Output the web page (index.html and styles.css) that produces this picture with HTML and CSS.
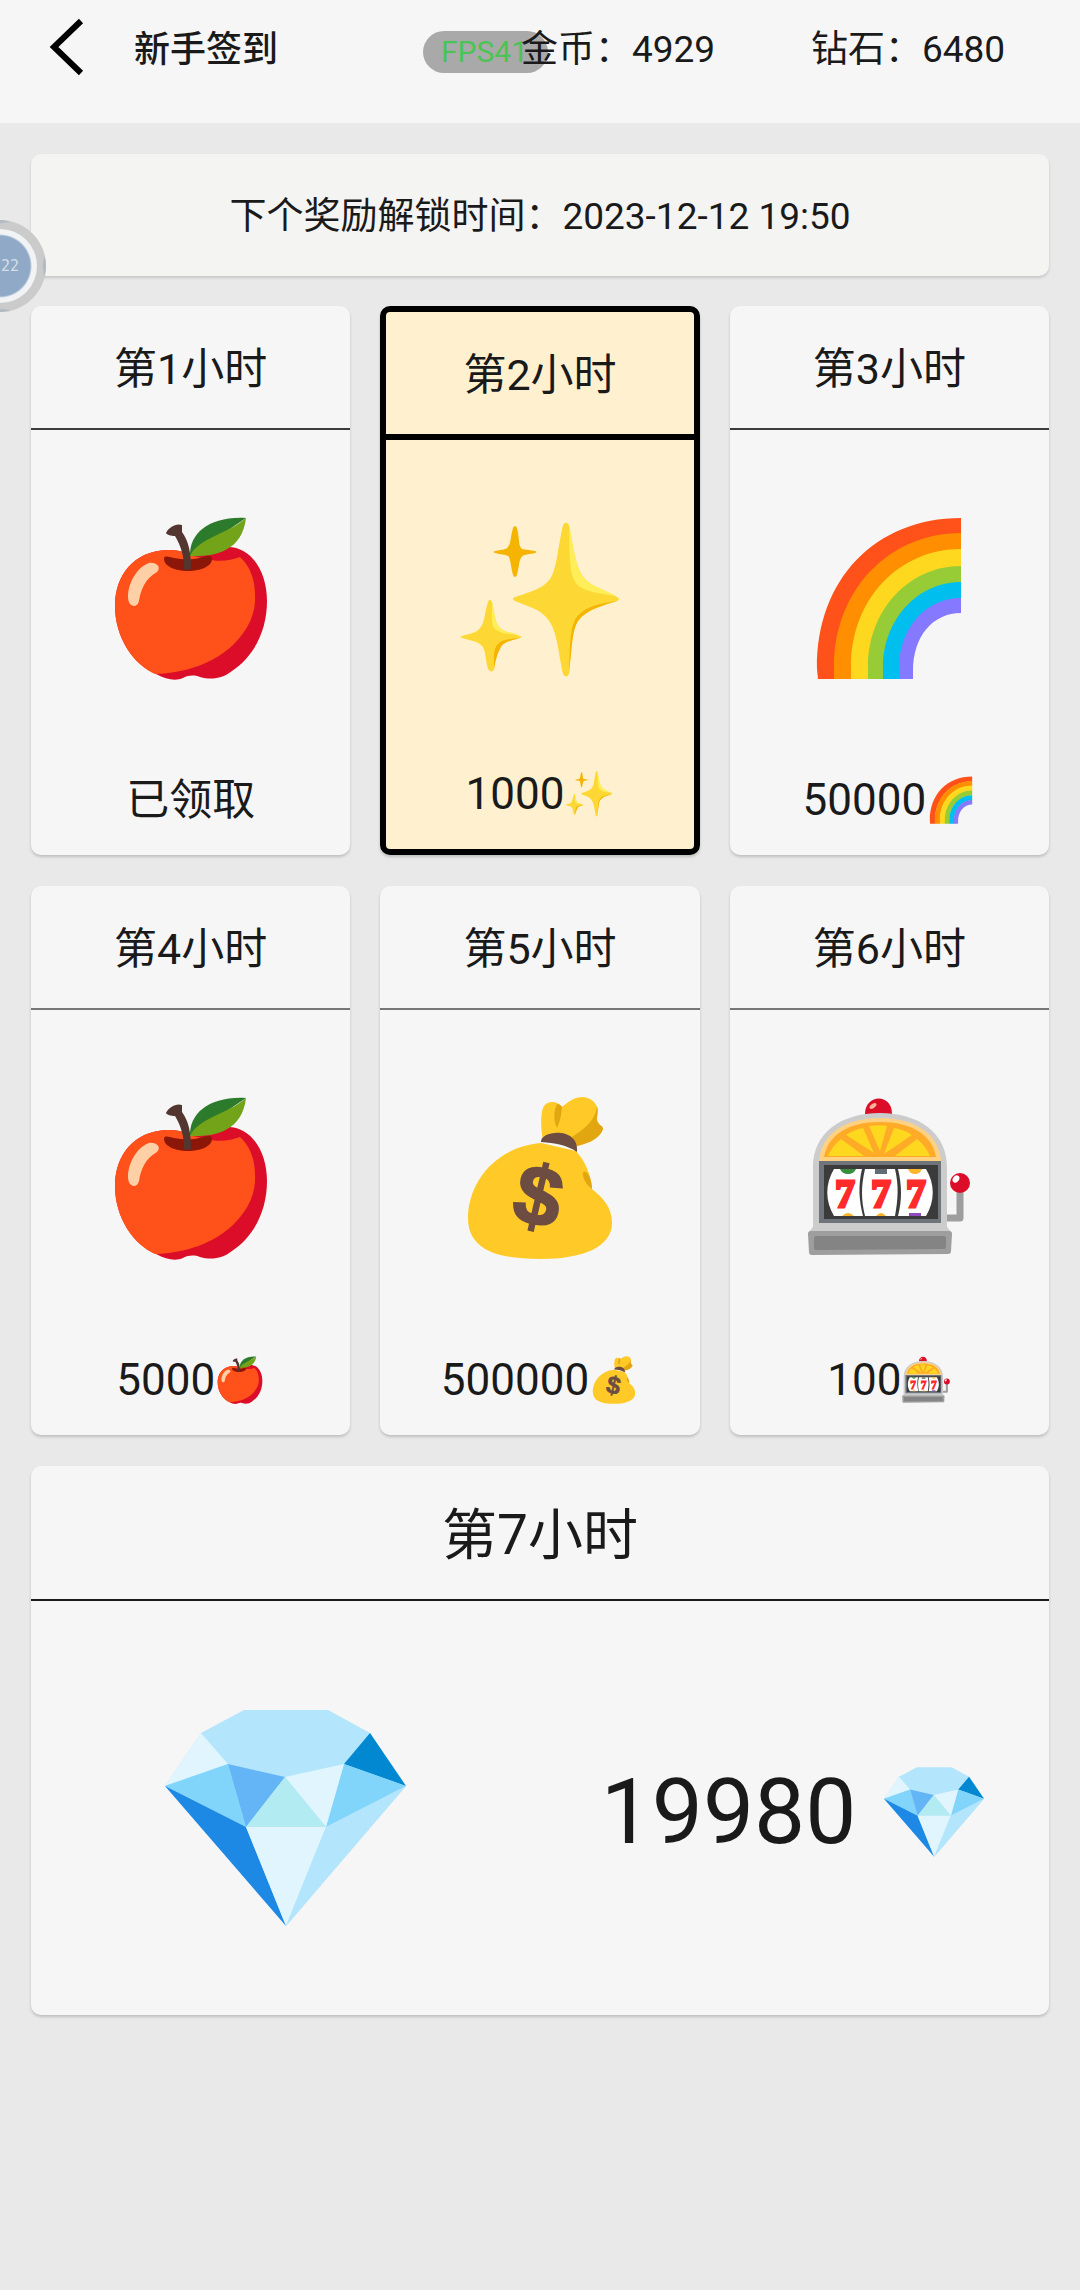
FILE: index.html
```html
<!DOCTYPE html>
<html lang="zh-CN">
<head>
    <meta charset="UTF-8">
    <meta name="viewport" content="width=device-width, initial-scale=1.0">
    <title>新手签到</title>
    <link rel="stylesheet" href="styles.css">
</head>
<body>
    <!-- reward icons, used large in the card and small next to the amount -->
    <svg class="sprite" aria-hidden="true">
        <symbol id="apple" viewBox="0 0 170 170">
            <path fill="#dc0d28" d="M61 37C28 38 9 62 9 93c0 32 19 59 41 68 11 6 20 7 27 4 6-3 11-3 17-1 11 3 22 2 32-6 24-16 35-43 35-70 0-30-16-54-39-54-16 0-27 8-39 8-5-4-13-5-22-5z"/>
            <path fill="#ff5119" d="M61 37C28 38 9 62 9 93c0 32 19 59 40 68 31-1 59-11 78-29 16-16 23-32 22-50 0-17-6-30-15-38-10 4-22 5-34 2L83 42c-5-4-13-5-22-5z"/>
            <path fill="#8c1709" d="M58 46c0 7 11 12 24 12s24-5 24-12c0-4-5-3-9-2-9 3-19 3-29 1-5-1-10-3-10 1z"/>
            <path fill="#543630" d="M60 20c3-6 10-10 16-8v7c6 8 9 19 9 37-3 1-5 1-7 0 0-13-3-23-9-33-4 0-8-1-9-3z"/>
            <path fill="#2c7b2c" d="M84 43C83 20 104 3 140 5L84 43z"/>
            <path fill="#72a319" d="M84 43c22 1 52-3 56-38-18 16-48 20-56 38z"/>
            <path fill="#ffcfa6" d="M22 84c0-16 11-31 21-34 7-1 13 4 8 9-12 7-16 17-18 29-2 8-11 6-11-4z"/>
        </symbol>
        <symbol id="sparkles" viewBox="0 0 170 170">
            <path fill="#fdd835" d="M108 10q3-5 6 0c6 31 7 45 18 56 7 6 15 8 30 16q4 2 0 4c-25 7-36 13-41 24-4 10-4 22-7 49q-3 5-6 0c-6-29-6-46-18-58-7-7-13-8-30-15q-4-2 0-4c18-6 27-8 35-18 7-11 7-27 13-54z"/>
            <path fill="#ffee58" d="M114 10c6 31 7 45 18 56 7 6 14 7 29 15-14-2-28-4-36-9-12-8-10-30-11-62z"/>
            <path fill="#f4b400" d="M163 86c-26 7-37 13-42 24-4 10-4 22-7 49 1-29 1-44 6-54 7-12 20-16 43-19z"/>
            <path fill="#f4b400" d="M58 13q2-4 4 0c3 13 1 17 5 21l13 2q3 1 0 2c-9 2-12 1-14 5-2 3-2 9-4 17q-2 4-4 0c-3-11-2-16-5-19-3-2-7-1-13-3q-3-1 0-2c8-2 11-1 13-4 3-4 2-8 5-19z"/>
            <path fill="#fdd835" d="M33 87q2-5 4 0c3 14 3 21 8 26 4 4 10 4 20 8q3 1 0 2c-12 3-18 5-20 11-3 5-4 10-6 20q-2 5-6 0c-3-11-2-20-7-24-4-4-9-4-19-7q-3-1 0-2c10-3 14-3 18-8 5-6 4-13 8-26z"/>
            <path fill="#ffee58" d="M37 87c3 14 3 21 8 26 4 4 9 4 19 7-12-1-21-2-25-7-3-5-2-13-2-26z"/>
            <path fill="#f4b400" d="M65 123c-12 3-18 5-20 11-3 5-4 10-6 20 0-12-1-18 3-24 5-6 12-6 23-7z"/>
        </symbol>
        <symbol id="rainbow" viewBox="0 0 170 170">
            <path fill="#ff5119" d="M157 5C72 5 12 66 13 156l1 10h17v-12C31 76 87 21 157 21z"/>
            <path fill="#ff8f00" d="M157 20C86 20 30 76 30 154v12h18v-12C48 86 96 37 157 37z"/>
            <path fill="#fdd81f" d="M157 36C95 36 47 86 47 154v12h18v-12c0-57 41-100 92-100z"/>
            <path fill="#97cc37" d="M157 53c-52 0-93 44-93 101v12h16v-11c0-47 34-85 77-85z"/>
            <path fill="#00bfee" d="M157 69c-44 0-78 38-78 86v11h17v-11c0-39 27-69 61-69z"/>
            <path fill="#8479ff" d="M157 85c-35 0-62 30-62 70v11h14v-8c0-35 20-58 48-58z"/>
        </symbol>
        <symbol id="money" viewBox="0 0 170 170">
            <path fill="#ffca28" d="M86 50C40 54 13 90 13 125c0 30 26 41 72 41 45 0 72-13 72-36 0-16-9-25-20-34-1-15-7-28-16-38z"/>
            <path fill="#e2a610" d="M128 79c4-3 9 7 9 17-6-4-10-12-9-17z"/>
            <path fill="#ffca28" d="M88 47c-3-15-2-30 1-34 4-6 14-5 18 1 10-9 21-14 31-6 6 6 5 11 4 18 2 8 6 7 6 10-3 9-13 14-26 17z"/>
            <path fill="#e2a610" d="M142 13c2 7-1 10 0 15 2 5 6 4 6 8-3 9-13 14-26 17l-5-9c14-9 24-18 25-31zM107 14c-1 8-1 12-5 21-4-8-3-18 0-24 2 0 4 1 5 3z"/>
            <path fill="#6d4c41" d="M86 49c-1-12 39-16 36 10-10-7-22-9-36-10z"/>
            <text class="money-sign" x="83" y="132" transform="rotate(13 83 105)">$</text>
        </symbol>
        <symbol id="slot" viewBox="0 0 170 170">
            <path fill="none" stroke="#9e9e9e" stroke-width="7" stroke-linejoin="round" d="M156 98v27h-14"/>
            <circle cx="156" cy="90" r="10" fill="#dc0d28"/>
            <ellipse cx="152" cy="86" rx="3" ry="4" fill="#fff" transform="rotate(35 152 86)"/>
            <path fill="#dc0d28" d="M61 21c0-20 27-21 27 0z"/>
            <ellipse cx="69" cy="13" rx="4" ry="2" fill="#ffb09a" transform="rotate(-35 69 13)"/>
            <path fill="#ccc" d="M9 134V74c0-34 28-54 67-54s67 20 67 54v60l5 6H4z"/>
            <path fill="#ffd180" d="M15 68c2-27 26-43 61-43s59 16 61 43z"/>
            <path fill="#ffab28" d="M20 64c4-22 24-35 56-35s52 13 56 35z"/>
            <path fill="#fdd81f" d="M24 63c3-7 7-12 13-17l23 17zM42 42c6-4 11-6 17-7l11 25zM65 33c7-1 13-1 18 0l-7 25zM90 35c7 1 12 3 18 7L80 61zM113 46c6 5 10 10 13 17H91z"/>
            <path fill="#70747b" d="M15 68h122v62H15z"/>
            <path fill="#3b3b3b" d="M20 72h114v54H20z"/>
            <path fill="#fff" d="M30 76h28c-4 17-3 31 1 47H30c-9-15-9-32 0-47zM61 76h30c4 17 3 31 0 47H61c-4-16-4-30 0-47zM94 76h28c9 15 9 32 0 47H94c4-16 4-30 0-47z"/>
            <path fill="#388e3c" d="M36 76h16q-2 5-8 5t-8-5z"/>
            <path fill="#616c75" d="M71 76h12v5H71z"/>
            <path fill="#fbb52a" d="M104 76h14q-2 5-7 5t-7-5zM38 123q6-6 12 0zM72 123q5-6 10 0z"/>
            <path fill="#8e4bc0" d="M105 123v-3h12v3z"/>
            <g class="sevens">
                <text x="41" y="114">7</text>
                <text x="77" y="114">7</text>
                <text x="112" y="114">7</text>
            </g>
            <path fill="#9e9e9e" d="M7 138h138q3 0 3 3l-1 17q0 3-3 3L8 162q-3 0-3-3L4 141q0-3 3-3z"/>
            <path fill="#848484" d="M12 143h128q2 0 2 2v9q0 2-2 2l-128 1q-2 0-2-2v-10q0-2 2-2z"/>
        </symbol>
        <symbol id="diamond" viewBox="0 0 241 216">
            <path fill="#b3e5fc" d="M79 0h84l42 23 36 53-120 140L0 76l36-53z"/>
            <path fill="#e1f5fe" d="M36 23l27 31L0 76z"/>
            <path fill="#0288d1" d="M205 23l36 53-62-22z"/>
            <path fill="#81d4fa" d="M0 76l63-22 18 63zM241 76l-62-22-18 63z"/>
            <path fill="#64b5f6" d="M63 54l57 13-39 50z"/>
            <path fill="#e1f5fe" d="M179 54l-59 13 41 50z"/>
            <path fill="#b2ebf2" d="M120 67l41 50H81z"/>
            <path fill="#1e88e5" d="M0 76l81 41 40 99z"/>
            <path fill="#e1f5fe" d="M81 117h80l-40 99z"/>
            <path fill="#b3e5fc" d="M161 117l80-41-120 140z"/>
        </symbol>
    </svg>

    <header class="top-bar">
        <button class="back" type="button" aria-label="返回">
            <svg viewBox="0 0 36 60"><path d="M33 4L6 30l27 26"/></svg>
        </button>
        <h1>新手签到</h1>
        <div class="balances">
            <span>金币：4929</span>
            <span>钻石：6480</span>
        </div>
    </header>

    <main>
        <div class="notice">下个奖励解锁时间：2023-12-12 19:50</div>

        <div class="card-grid">
            <div class="card">
                <h2>第1小时</h2>
                <div class="reward"><svg class="icon"><use href="#apple"/></svg></div>
                <div class="amount claimed">已领取</div>
            </div>
            <div class="card active">
                <h2>第2小时</h2>
                <div class="reward"><svg class="icon"><use href="#sparkles"/></svg></div>
                <div class="amount">1000<svg class="icon-small"><use href="#sparkles"/></svg></div>
            </div>
            <div class="card">
                <h2>第3小时</h2>
                <div class="reward"><svg class="icon"><use href="#rainbow"/></svg></div>
                <div class="amount">50000<svg class="icon-small"><use href="#rainbow"/></svg></div>
            </div>
            <div class="card later">
                <h2>第4小时</h2>
                <div class="reward"><svg class="icon"><use href="#apple"/></svg></div>
                <div class="amount">5000<svg class="icon-small"><use href="#apple"/></svg></div>
            </div>
            <div class="card later">
                <h2>第5小时</h2>
                <div class="reward"><svg class="icon"><use href="#money"/></svg></div>
                <div class="amount">500000<svg class="icon-small"><use href="#money"/></svg></div>
            </div>
            <div class="card later">
                <h2>第6小时</h2>
                <div class="reward"><svg class="icon"><use href="#slot"/></svg></div>
                <div class="amount">100<svg class="icon-small"><use href="#slot"/></svg></div>
            </div>
            <div class="card final">
                <h2>第7小时</h2>
                <div class="final-body">
                    <div class="reward"><svg class="diamond"><use href="#diamond"/></svg></div>
                    <div class="final-amount">19980<svg class="diamond-small"><use href="#diamond"/></svg></div>
                </div>
            </div>
        </div>
    </main>

    <div class="fps">FPS41</div>
    <div class="float-ball"><span>22</span></div>
</body>
</html>
```

FILE: styles.css
```css
* {
    box-sizing: border-box;
}
body {
    font-family: Roboto, "Noto Sans CJK SC", sans-serif;
    font-size: 37px;
    line-height: 48px;
    background-color: #e9e9e9;
    color: #1a1a1a;
    margin: 0;
    position: relative;
    overflow-x: hidden;
}
h1, h2 {
    margin: 0;
}
.sprite {
    display: none;
}

/* top bar */
.top-bar {
    display: flex;
    height: 123px;
    padding: 17px 27px 0 48px;
    background-color: #f6f6f6;
}
.back {
    width: 36px;
    height: 60px;
    padding: 0;
    border: none;
    background: none;
    cursor: pointer;
}
.back svg {
    display: block;
    width: 36px;
    height: 60px;
    fill: none;
    stroke: #000;
    stroke-width: 6;
}
h1 {
    margin-left: 50px;
    font-size: 36px;
    font-weight: 500;
    line-height: 66px;
}
.balances {
    position: relative;
    z-index: 2;
    display: flex;
    width: 580px;
    margin-left: auto;
    line-height: 66px;
    text-align: center;
}
.balances span {
    flex: 1;
}

main {
    padding: 31px;
}
.notice {
    padding: 39px 20px 35px;
    margin-bottom: 30px;
    border-radius: 10px;
    background-color: #f4f4f2;
    box-shadow: 0 2px 3px rgba(0, 0, 0, 0.15);
    text-align: center;
}

/* reward cards */
.card-grid {
    display: grid;
    grid-template-columns: repeat(3, 1fr);
    gap: 31px 30px;
}
.card {
    display: flex;
    flex-direction: column;
    min-height: 549px;
    border-radius: 10px;
    background-color: #f6f6f6;
    box-shadow: 0 2px 3px rgba(0, 0, 0, 0.18);
    text-align: center;
}
.card h2 {
    padding: 39px 0 35px;
    border-bottom: 2px solid #3c3c3c;
    font-size: 43px;
    font-weight: 400;
}
.card.later h2 {
    border-color: #777;
}
.card.active {
    border: 6px solid #000;
    background-color: #fff1d0;
}
.card.active h2 {
    border-bottom: 6px solid #000;
}
.reward {
    flex: 1;
    display: flex;
    align-items: center;
    justify-content: center;
    padding-top: 20px;
}
.icon {
    width: 170px;
    height: 170px;
}
.amount {
    display: flex;
    align-items: center;
    justify-content: center;
    height: 110px;
    font-size: 44px;
}
.amount.claimed {
    font-size: 43px;
}
.icon-small {
    width: 50px;
    height: 50px;
}
.card.final {
    grid-column: 1 / -1;
}
.card.final h2 {
    padding: 45px 0 40px;
    border-color: #1a1a1a;
    font-size: 55px;
}
.final-body {
    flex: 1;
    display: flex;
}
.diamond {
    width: 241px;
    height: 216px;
}
.final-amount {
    flex: 1;
    display: flex;
    align-items: center;
    justify-content: center;
    padding-top: 8px;
    font-size: 91px;
}
.diamond-small {
    width: 100px;
    height: 90px;
    margin: 0 4px 0 28px;
}
.money-sign {
    fill: #6d4c41;
    stroke: #6d4c41;
    stroke-width: 2;
    font-family: "Liberation Sans", sans-serif;
    font-size: 84px;
    font-weight: 700;
    text-anchor: middle;
}
.sevens {
    fill: #ff2a2a;
    stroke: #ff2a2a;
    stroke-width: 3;
    font-family: "Liberation Serif", serif;
    font-size: 39px;
    font-weight: 700;
    text-anchor: middle;
}

/* overlays */
.fps {
    position: absolute;
    top: 31px;
    left: 423px;
    z-index: 1;
    width: 125px;
    padding-left: 18px;
    border-radius: 21px;
    background-color: #a9a9a9;
    color: #4ac454;
    font-size: 30px;
    line-height: 42px;
}
.float-ball {
    position: absolute;
    top: 220px;
    left: -46px;
    display: flex;
    align-items: center;
    justify-content: flex-end;
    width: 92px;
    height: 92px;
    padding-right: 18px;
    border: 9px solid rgba(190, 190, 190, 0.75);
    border-radius: 50%;
    background: radial-gradient(circle, #8fa9c6 30px, #f1f3f5 32px);
    color: #d5dee6;
    font-family: "DejaVu Sans Mono", monospace;
    font-size: 15px;
    line-height: 20px;
}
```
